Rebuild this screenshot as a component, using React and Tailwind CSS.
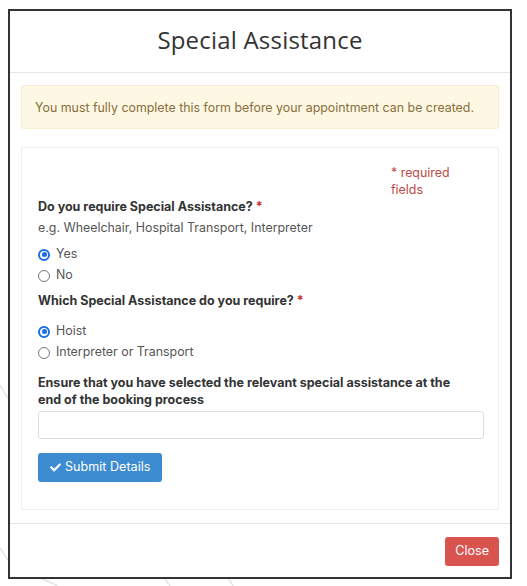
import React from "react";
import { FaCheck } from "react-icons/fa";

const Radio = ({ checked, label }) => (
  <label className="flex h-[21px] items-center gap-[6px] text-[12.4px] text-[#555]">
    {checked ? (
      <span className="flex h-[12px] w-[12px] items-center justify-center rounded-full border-[2px] border-[#1a6ee6]">
        <span className="h-[5px] w-[5px] rounded-full bg-[#1a6ee6]" />
      </span>
    ) : (
      <span className="h-[12px] w-[12px] rounded-full border border-[#767680]" />
    )}
    <span>{label}</span>
  </label>
);

export default function App() {
  return (
    <div className="relative h-[586px] w-[527px] overflow-hidden bg-white font-['Inter',sans-serif]">
      {/* faint backdrop strokes */}
      <svg className="absolute inset-0" width="527" height="586" fill="none" stroke="#e4e4e4" strokeWidth="1.5">
        <path d="M0 385 Q4 392 9 400" />
        <path d="M0 548 Q4 554 8 560" />
        <path d="M40 578 Q50 582 58 586" />
        <path d="M165 579 Q168 583 170 586" />
        <path d="M228 578 Q231 582 233 586" />
      </svg>

      <div className="relative ml-[8px] mt-[9px] w-[504px] border-2 border-[#333] bg-white">
        {/* header */}
        <div className="flex h-[62px] items-center justify-center border-b border-[#e5e5e5] pb-[4px]">
          <h1 className="font-['Open_Sans',sans-serif] text-[24px] font-normal tracking-[0.2px] text-[#333]">
            Special Assistance
          </h1>
        </div>

        {/* body */}
        <div className="px-[11px] pb-[13px] pt-[12px]">
          <div className="flex h-[44px] items-center whitespace-nowrap rounded-[3px] border border-[#faebcc] bg-[#fcf8e3] px-[13px] pt-[2px] text-[12.4px] text-[#8a6d3b]">
            You must fully complete this form before your appointment can be created.
          </div>

          <div className="mt-[18px] rounded-[2px] border border-[#eee] px-[16px] pb-[27px] pt-[16px]">
            <div className="flex justify-end">
              <div className="w-[91px] text-[12.4px] leading-[17px] text-[#b94a48]">
                * required fields
              </div>
            </div>

            <div className="text-[12.5px] font-bold leading-[18px] text-[#333]">
              Do you require Special Assistance? <span className="text-[#c9302c]">*</span>
            </div>
            <div className="mt-[3px] text-[12.4px] leading-[18px] text-[#555]">
              e.g. Wheelchair, Hospital Transport, Interpreter
            </div>
            <div className="mt-[7px]">
              <Radio checked label="Yes" />
              <Radio label="No" />
            </div>

            <div className="mt-[6px] text-[12.5px] font-bold leading-[18px] text-[#333]">
              Which Special Assistance do you require? <span className="text-[#c9302c]">*</span>
            </div>
            <div className="mt-[11px]">
              <Radio checked label="Hoist" />
              <Radio label="Interpreter or Transport" />
            </div>

            <div className="mt-[11px] w-[430px] text-[12.5px] font-bold leading-[17px] text-[#333]">
              Ensure that you have selected the relevant special assistance at the end of the booking process
            </div>
            <input
              type="text"
              className="mt-[3px] block h-[28px] w-[446px] rounded-[3px] border border-[#ddd] px-2 text-[13px] outline-none"
            />
            <button className="mt-[14px] flex h-[29px] items-center gap-[4px] rounded-[3px] bg-[#3d8bd0] px-[12px] text-[12.6px] text-white">
              <FaCheck className="h-[11px] w-[11px]" />
              Submit Details
            </button>
          </div>
        </div>

        {/* footer */}
        <div className="flex justify-end border-t border-[#e5e5e5] px-[11px] pb-[11px] pt-[13px]">
          <button className="h-[29px] rounded-[3px] bg-[#d9534f] px-[10px] text-[12.6px] text-white">
            Close
          </button>
        </div>
      </div>
    </div>
  );
}
